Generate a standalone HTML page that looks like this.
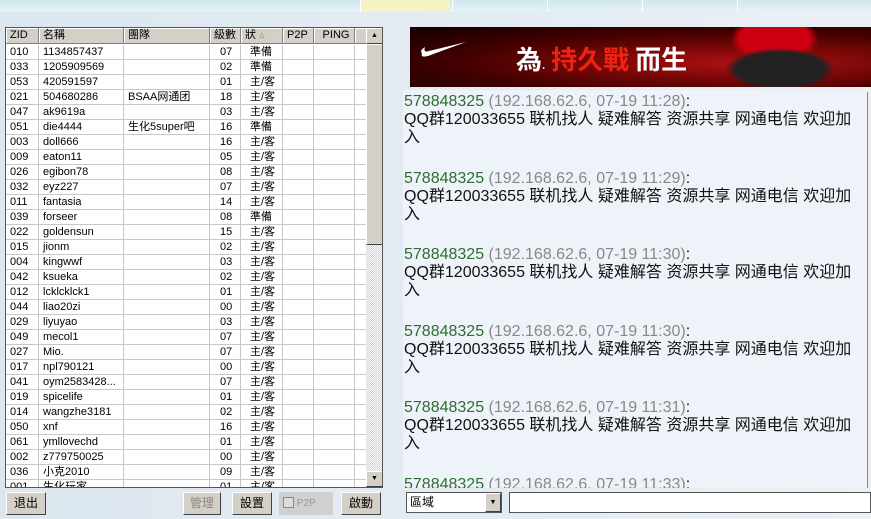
<!DOCTYPE html><html><head><meta charset="utf-8"><style>
*{margin:0;padding:0;box-sizing:border-box}
body{width:871px;height:519px;overflow:hidden;position:relative;background:linear-gradient(90deg,#dde7ef,#e9f0f6);font-family:"Liberation Sans","Noto Sans CJK SC",sans-serif}
.top{position:absolute;left:0;top:0;width:871px;height:12px;background:linear-gradient(#cfe6ee,#e6f2f6)}
.tab{position:absolute;top:0;height:12px;border-left:1px solid #fff}
.tbl{position:absolute;left:5px;top:27px;width:378px;height:461px;background:#fff;border:1px solid #555;overflow:hidden}
.row{position:absolute;left:0;height:15px;font-size:11px;line-height:15px;white-space:nowrap}
.c{position:absolute;top:0;height:15px;border-right:1px solid #c8c8c8;border-bottom:1px solid #c8c8c8;padding-left:4px;overflow:hidden}
.hd .c{background:#d4d0c8;border-right:1px solid #808080;border-bottom:1px solid #808080;box-shadow:inset 1px 1px #fff;height:16px}
.sb{position:absolute;left:360px;top:0;width:17px;height:459px;background:repeating-conic-gradient(#d4d0c8 0 25%,#fff 0 50%) 0 0/2px 2px}
.sbb{position:absolute;left:0;width:17px;height:16px;background:#d4d0c8;border:1px solid;border-color:#fff #404040 #404040 #fff;font-size:7px;text-align:center;line-height:14px}
.btn{position:absolute;top:492px;height:23px;background:#d4d0c8;border:1px solid;border-color:#fff #404040 #404040 #fff;font-size:12px;text-align:center;line-height:21px}
.chat{position:absolute;left:403px;top:90px;width:465px;height:398px;background:#eef2f9;font-size:16px;line-height:18px;color:#111;overflow:hidden}
.m{position:absolute;left:1px;white-space:nowrap}
.g{color:#2e6e2e}.gr{color:#888}
</style></head><body>
<div class="top"><div class="tab" style="left:360px;width:90px;background:#f6f3c6"></div><div class="tab" style="left:452px;width:95px"></div><div class="tab" style="left:547px;width:95px"></div><div class="tab" style="left:642px;width:95px"></div><div class="tab" style="left:737px;width:134px"></div></div>
<div class="tbl">
<div class="row hd" style="top:0"><div class="c" style="left:0;width:33px">ZID</div><div class="c" style="left:33px;width:85px">名稱</div><div class="c" style="left:118px;width:86px">團隊</div><div class="c" style="left:204px;width:31px">級數</div><div class="c" style="left:235px;width:42px">狀 <span style="color:#999">▵</span></div><div class="c" style="left:277px;width:31px">P2P</div><div class="c" style="left:308px;width:41px;text-align:center">PING</div><div class="c" style="left:349px;width:12px"></div></div>
<div id="rows"></div>
<div class="sb"><div class="sbb" style="top:0">▲</div><div class="sbb" style="top:16px;height:201px"></div><div class="sbb" style="top:443px">▼</div></div>
</div>
<div class="btn" style="left:6px;width:40px">退出</div>
<div class="btn" style="left:183px;width:38px;color:#888">管理</div>
<div class="btn" style="left:232px;width:40px">設置</div>
<div style="position:absolute;left:279px;top:492px;width:54px;height:23px;background:#d0d0d0;font-size:10px;color:#999;line-height:23px;padding-left:4px"><span style="display:inline-block;width:11px;height:11px;border:1px solid #888;vertical-align:-2px;background:#ddd"></span> P2P</div>
<div class="btn" style="left:341px;width:40px">啟動</div>
<div style="position:absolute;left:410px;top:27px;width:461px;height:60px;overflow:hidden;background:radial-gradient(ellipse at 72% 60%,#b01010,#400 60%,#100)">
<svg style="position:absolute;left:10px;top:12px" width="48" height="20"><path d="M2 14 Q0 19 8 17 L46 3 L9 12 Q3 14 5 8 Q-1 12 2 14Z" fill="#fff"/></svg>
<div style="position:absolute;left:106px;top:17px;font-size:26px;font-weight:bold;color:#fff;font-family:'Noto Sans CJK SC',sans-serif;line-height:30px;white-space:nowrap">為<span style="font-size:10px">.</span> <span style="color:#e21">持久戰</span> 而生</div>
<div style="position:absolute;left:315px;top:0;width:110px;height:60px;background:radial-gradient(ellipse 50% 35% at 50% 70%,#222 80%,transparent 100%),radial-gradient(ellipse 40% 40% at 45% 20%,#c01 80%,transparent 100%)"></div>
</div>
<div class="chat" id="chat"></div>
<div style="position:absolute;left:867px;top:92px;width:4px;height:396px;background:#eee;border-left:1px solid #888"></div>
<div style="position:absolute;left:406px;top:492px;width:96px;height:21px;background:#fff;border:1px solid #555;font-size:12px;line-height:19px;padding-left:3px">區域<div style="position:absolute;right:0;top:0;width:16px;height:19px;background:#d4d0c8;border:1px solid;border-color:#fff #404040 #404040 #fff;font-size:7px;text-align:center;line-height:17px">▼</div></div>
<div style="position:absolute;left:509px;top:492px;width:362px;height:21px;background:#fff;border:1px solid #555"></div>
<script>
var d=[["010","1134857437","","07","準備"],["033","1205909569","","02","準備"],["053","420591597","","01","主/客"],["021","504680286","BSAA网通团","18","主/客"],["047","ak9619a","","03","主/客"],["051","die4444","生化5super吧","16","準備"],["003","doll666","","16","主/客"],["009","eaton11","","05","主/客"],["026","egibon78","","08","主/客"],["032","eyz227","","07","主/客"],["011","fantasia","","14","主/客"],["039","forseer","","08","準備"],["022","goldensun","","15","主/客"],["015","jionm","","02","主/客"],["004","kingwwf","","03","主/客"],["042","ksueka","","02","主/客"],["012","lcklcklck1","","01","主/客"],["044","liao20zi","","00","主/客"],["029","liyuyao","","03","主/客"],["049","mecol1","","07","主/客"],["027","Mio.","","07","主/客"],["017","npl790121","","00","主/客"],["041","oym2583428...","","07","主/客"],["019","spicelife","","01","主/客"],["014","wangzhe3181","","02","主/客"],["050","xnf","","16","主/客"],["061","ymllovechd","","01","主/客"],["002","z779750025","","00","主/客"],["036","小克2010","","09","主/客"],["001","生化玩家","","01","主/客"]];
var h="";d.forEach(function(r,i){h+='<div class="row" style="top:'+(17+i*15)+'px"><div class="c" style="left:0;width:33px">'+r[0]+'</div><div class="c" style="left:33px;width:85px">'+r[1]+'</div><div class="c" style="left:118px;width:86px">'+r[2]+'</div><div class="c" style="left:204px;width:31px;padding-left:10px">'+r[3]+'</div><div class="c" style="left:235px;width:42px;padding-left:9px">'+r[4]+'</div><div class="c" style="left:277px;width:31px"></div><div class="c" style="left:308px;width:41px"></div><div class="c" style="left:349px;width:12px"></div></div>'});
document.getElementById("rows").innerHTML=h;
var t=["11:28","11:29","11:30","11:30","11:31","11:33"],c="";
t.forEach(function(x,i){c+='<div class="m" style="top:'+(3+i*76.5)+'px"><span class="g">578848325</span> <span class="gr">(192.168.62.6, 07-19 '+x+')</span>:<br>QQ群120033655 联机找人 疑难解答 资源共享 网通电信 欢迎加<br>入</div>'});
document.getElementById("chat").innerHTML=c;
</script>
</body></html>
